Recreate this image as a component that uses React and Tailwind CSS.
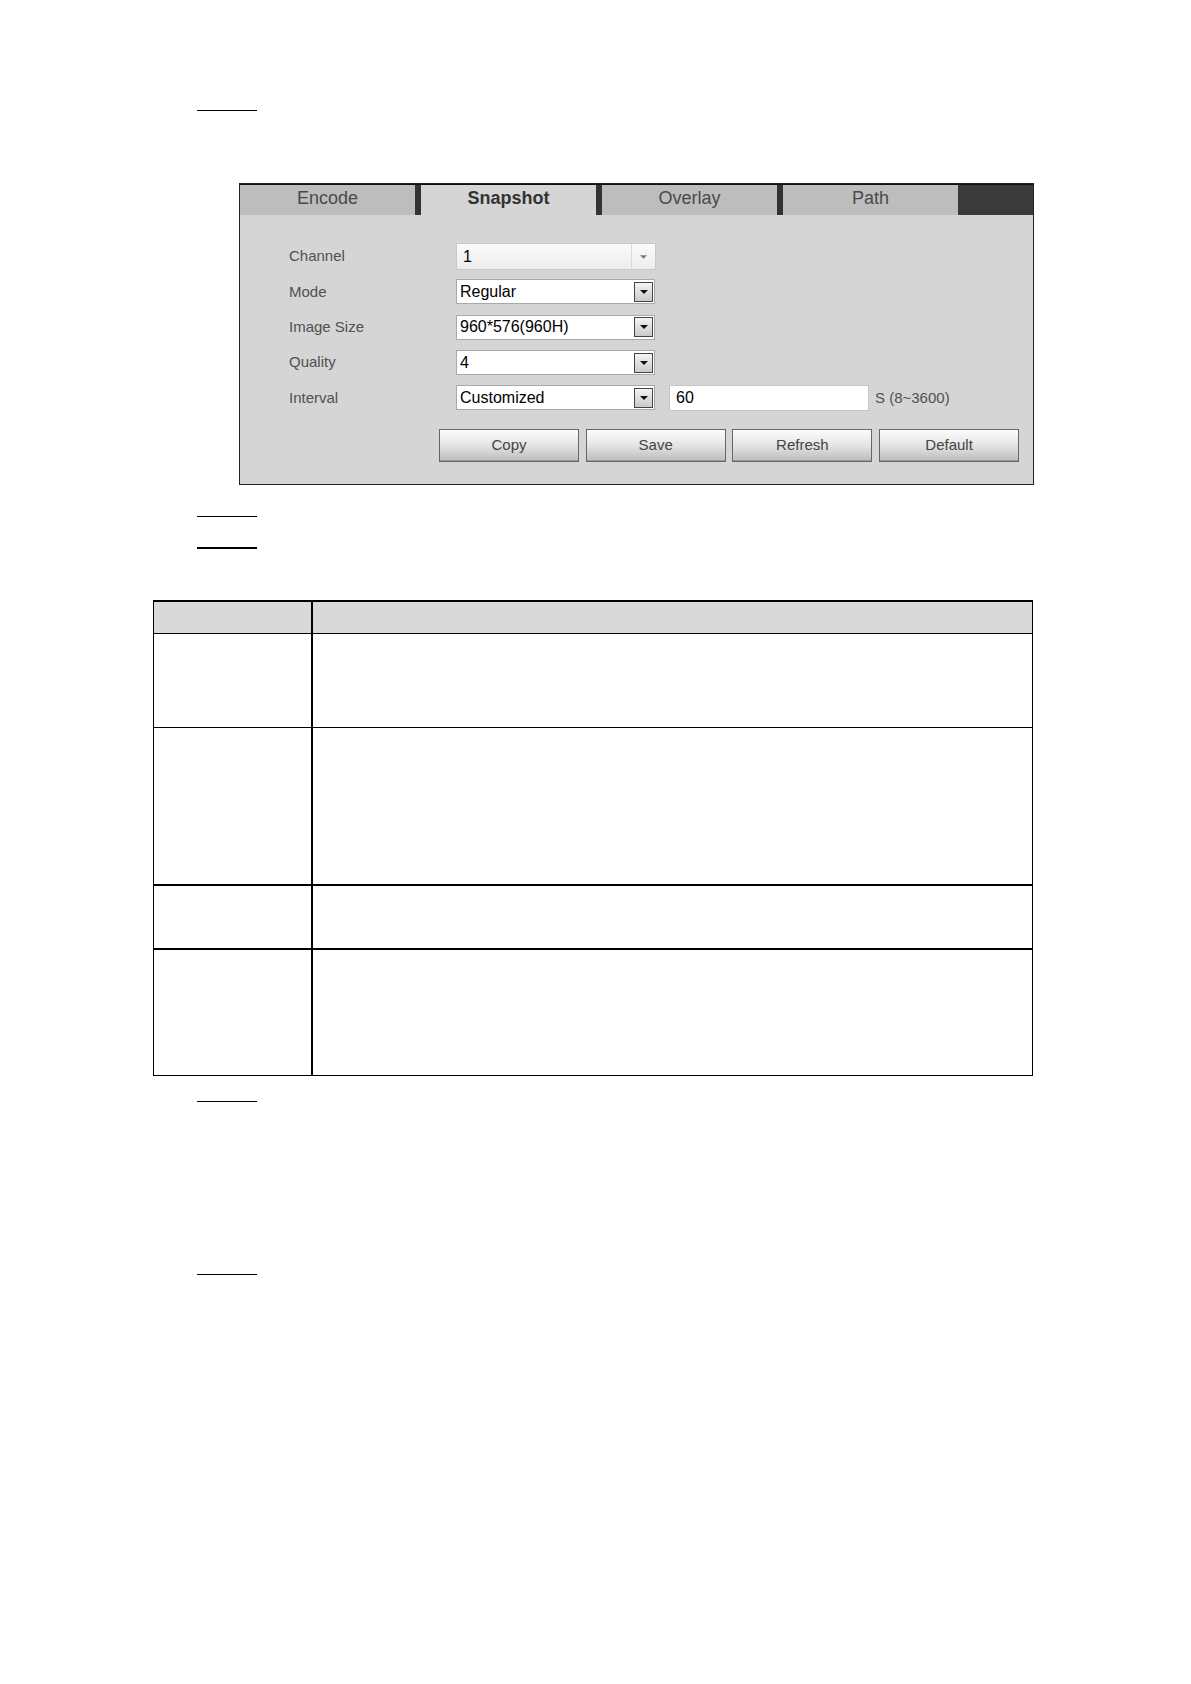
import React from "react";

function Line({ className }) {
  return <div className={className} />;
}

function Arrow({ color = "#111", w = 8, h = 4 }) {
  return (
    <svg width={w} height={h} viewBox="0 0 8 4">
      <path d="M0 0 L8 0 L4 4 Z" fill={color} />
    </svg>
  );
}

function Select({ value }) {
  return (
    <div className="flex h-[25px] w-[199px] items-center border border-[#a9a9a9] bg-white">
      <div className="flex-1 pl-[3px] text-[16px] leading-none text-black">{value}</div>
      <div className="mr-[1px] flex h-[20px] w-[19px] items-center justify-center border border-[#444] bg-gradient-to-b from-[#f4f4f4] to-[#cacaca]">
        <Arrow />
      </div>
    </div>
  );
}

function Row({ label, children }) {
  return (
    <div className="flex h-[35.3px] items-center">
      <div className="w-[167px] text-[15px] text-[#505050]">{label}</div>
      {children}
    </div>
  );
}

function Btn({ children }) {
  return (
    <div className="flex h-[33px] w-[140px] items-center justify-center border border-[#666] bg-gradient-to-b from-[#fdfdfd] via-[#e4e4e4] to-[#bcbcbc] pb-[2px] text-[15px] text-[#444] shadow-[inset_0_-1px_0_#9a9a9a]">
      {children}
    </div>
  );
}

function Tab({ children, active }) {
  return (
    <div
      className={
        "flex h-full w-[175px] items-center justify-center text-[18px] " +
        (active ? "bg-[#d5d5d5] font-bold text-[#333]" : "bg-[#bdbdbd] text-[#4a4a4a]")
      }
    >
      <span className="-mt-[3px]">{children}</span>
    </div>
  );
}

function Sep() {
  return <div className="h-full w-[6px] bg-[#333]" />;
}

export default function App() {
  return (
    <div className="min-h-[1684px] w-[1191px] bg-white font-['Liberation_Sans',Arial,sans-serif]">
      <div className="pl-[197px] pt-[110px]">
        <Line className="h-px w-[60px] bg-black" />
      </div>

      {/* Screenshot panel */}
      <div className="ml-[239px] mt-[72px] h-[302px] w-[795px] border border-[#222] bg-[#d5d5d5]">
        <div className="flex h-[31px] border-t border-[#111]">
          <Tab>Encode</Tab>
          <Sep />
          <Tab active>Snapshot</Tab>
          <Sep />
          <Tab>Overlay</Tab>
          <Sep />
          <Tab>Path</Tab>
          <div className="h-full flex-1 bg-[#3a3a3a]" />
        </div>
        <div className="pl-[49px] pt-[24px]">
          <Row label="Channel">
            <div className="flex h-[27px] w-[200px] items-center border border-[#c9c9c9] bg-gradient-to-b from-[#fbfbfb] to-[#ededed]">
              <div className="flex-1 pl-[6px] text-[16px] leading-none text-black">1</div>
              <div className="flex h-full w-[24px] items-center justify-center border-l border-[#dcdcdc]">
                <Arrow color="#777" w={7} h={4} />
              </div>
            </div>
          </Row>
          <Row label="Mode">
            <Select value="Regular" />
          </Row>
          <Row label="Image Size">
            <Select value="960*576(960H)" />
          </Row>
          <Row label="Quality">
            <Select value="4" />
          </Row>
          <Row label="Interval">
            <Select value="Customized" />
            <div className="ml-[14px] flex h-[26px] w-[200px] items-center border border-[#c6c6c6] bg-white pl-[6px] text-[16px] text-black">
              60
            </div>
            <div className="ml-[6px] text-[15px] text-[#505050]">S (8~3600)</div>
          </Row>
          <div className="ml-[150px] mt-[14px] flex gap-[6.7px]">
            <Btn>Copy</Btn>
            <Btn>Save</Btn>
            <Btn>Refresh</Btn>
            <Btn>Default</Btn>
          </div>
        </div>
      </div>

      <div className="pl-[197px] pt-[31px]">
        <Line className="h-px w-[60px] bg-black" />
      </div>
      <div className="pl-[197px] pt-[30px]">
        <Line className="h-[2px] w-[60px] bg-black" />
      </div>

      {/* Table */}
      <div className="ml-[153px] mt-[51px] w-[880px] border-x border-t-2 border-b border-black">
        <div className="flex h-[32px] border-b border-black bg-[#d9d9d9]">
          <div className="w-[159px] border-r-2 border-black" />
          <div className="flex-1" />
        </div>
        <div className="flex h-[94px] border-b border-black">
          <div className="w-[159px] border-r-2 border-black" />
          <div className="flex-1" />
        </div>
        <div className="flex h-[158px] border-b-2 border-black">
          <div className="w-[159px] border-r-2 border-black" />
          <div className="flex-1" />
        </div>
        <div className="flex h-[64px] border-b-2 border-black">
          <div className="w-[159px] border-r-2 border-black" />
          <div className="flex-1" />
        </div>
        <div className="flex h-[125px]">
          <div className="w-[159px] border-r-2 border-black" />
          <div className="flex-1" />
        </div>
      </div>

      <div className="pl-[197px] pt-[25px]">
        <Line className="h-px w-[60px] bg-black" />
      </div>
      <div className="pl-[197px] pt-[172px]">
        <Line className="h-px w-[60px] bg-black" />
      </div>
    </div>
  );
}
